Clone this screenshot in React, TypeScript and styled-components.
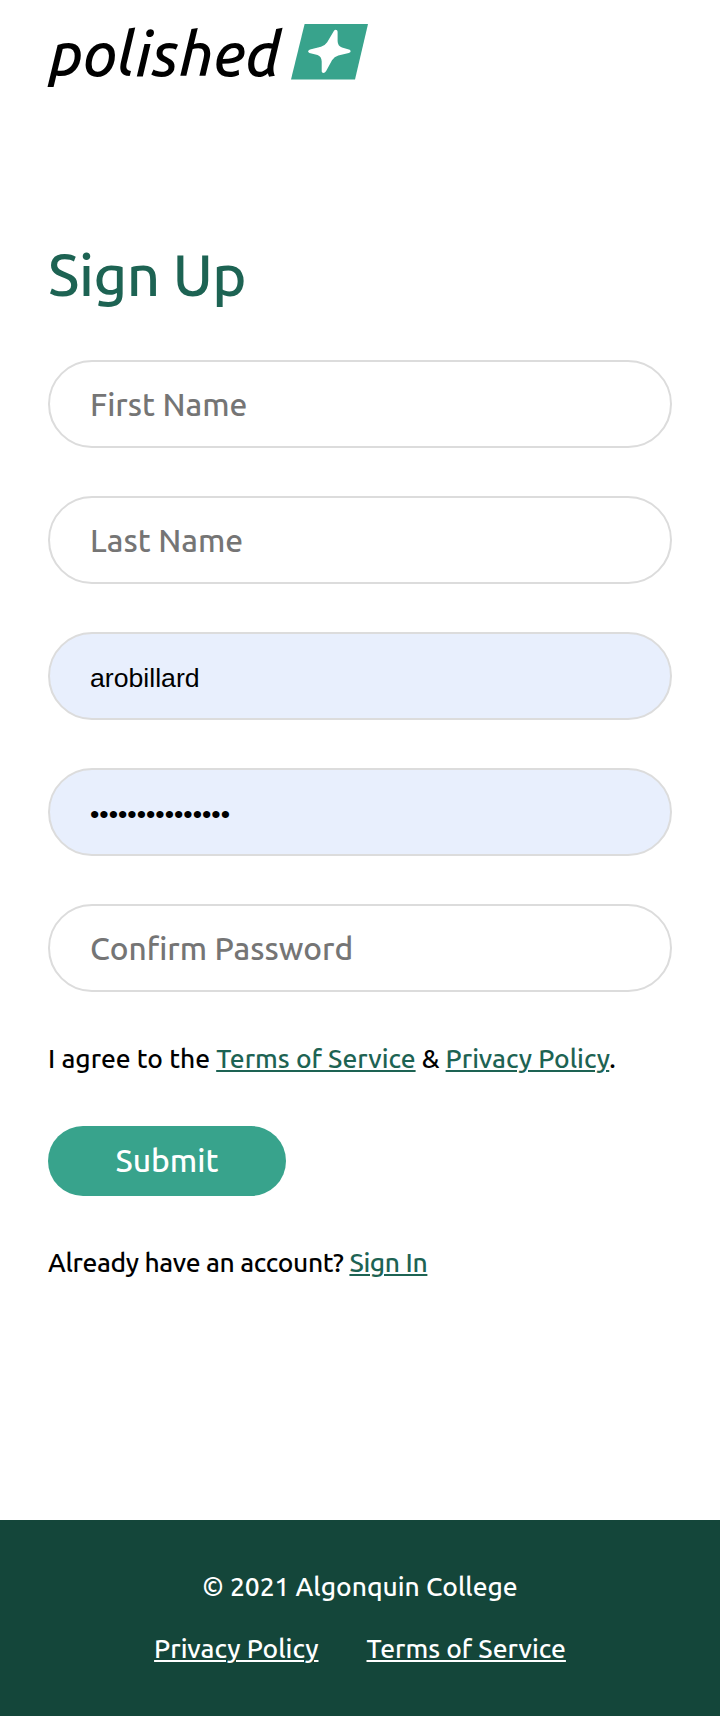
import React from "react";
import styled, { createGlobalStyle } from "styled-components";

const GlobalStyle = createGlobalStyle`
  *, *::before, *::after { box-sizing: border-box; }
  body {
    margin: 0;
    background: #fff;
    color: #000;
    font-family: Ubuntu, "Noto Sans", sans-serif;
    font-size: 26.4px;
    font-weight: 500;
    line-height: 40px;
  }
`;

const Page = styled.div`
  display: flex;
  flex-direction: column;
  min-height: 1716px;
`;

const Header = styled.header`
  display: flex;
  align-items: flex-start;
  padding: 24px 48px 0 49px;
  height: 80px;
`;

const Wordmark = styled.span`
  width: 242px;
  font-size: 61.6px;
  font-style: italic;
  line-height: 60px;
  white-space: nowrap;
`;

const Main = styled.main`
  flex: 1;
  padding: 159px 48px 0;
`;

const Title = styled.h1`
  margin: 0 0 49px;
  color: #1d6353;
  font-size: 58px;
  font-weight: 500;
  line-height: 72px;
  letter-spacing: -0.5px;
`;

const Form = styled.form`
  display: flex;
  flex-direction: column;
  align-items: flex-start;
`;

const Fields = styled.div`
  display: flex;
  flex-direction: column;
  gap: 48px;
  width: 100%;
`;

const Field = styled.input<{ $filled?: boolean }>`
  width: 100%;
  height: 88px;
  margin: 0;
  padding: ${(p) => (p.$filled ? "4px 40px 0" : "0 40px")};
  border: 2px solid #dcdcdc;
  border-radius: 44px;
  outline: none;
  background: ${(p) => (p.$filled ? "#e8effd" : "#fff")};
  color: #000;
  font-family: ${(p) => (p.$filled ? '"Liberation Sans", Arial, sans-serif' : 'Ubuntu, "Noto Sans", sans-serif')};
  font-size: ${(p) => (p.$filled ? "26.67px" : "31.7px")};
  font-weight: ${(p) => (p.$filled ? 400 : 500)};

  &::placeholder {
    color: #757575;
    opacity: 1;
  }
`;

const Note = styled.p<{ $tight?: boolean }>`
  margin: 46px 0 0;
  letter-spacing: ${(p) => (p.$tight ? "-0.34px" : "0")};
`;

const Link = styled.a<{ $light?: boolean }>`
  color: ${(p) => (p.$light ? "#fff" : "#1d6353")};
  text-decoration: underline;
  text-decoration-thickness: 2px;
  text-underline-offset: 2px;
`;

const Submit = styled.button`
  width: 238px;
  height: 70px;
  margin-top: 48px;
  padding: 0 0 2px;
  border: 0;
  border-radius: 35px;
  background: #38a38c;
  color: #fff;
  font-family: inherit;
  font-size: 31.8px;
  font-weight: 500;
`;

const Footer = styled.footer`
  display: flex;
  flex-direction: column;
  align-items: center;
  gap: 22px;
  height: 196px;
  padding-top: 46px;
  background: #14463a;
  color: #fff;
`;

const FooterLinks = styled.nav`
  display: flex;
  gap: 48px;
`;

const LogoMark = () => (
  <svg width="77" height="56" viewBox="0 0 77 56" aria-hidden="true">
    <path d="M13.6 0H77L64 55.5H0Z" fill="#38a38c" />
    <path
      d="M43 6.7Q44.4 5 46 6.2Q46.6 6.8 46.6 8V17Q46.7 22 51 23.6L58.7 25.7Q60.5 26.8 59.2 28.3L57.8 29L47.3 31.5Q43.3 32.6 41 36.2L35 47.3Q33.3 49.7 31.2 48.6Q30.6 48 30.7 46.5V37.5Q30.5 32.3 26.5 31L18.4 29Q16.2 27.6 17.8 26.2L19 25.6L30 22.7Q34 21.6 36.2 18.3Z"
      fill="#fff"
    />
  </svg>
);

export default function App() {
  return (
    <>
      <GlobalStyle />
      <Page>
        <Header>
          <Wordmark>polished</Wordmark>
          <LogoMark />
        </Header>
        <Main>
          <Title>Sign Up</Title>
          <Form>
            <Fields>
              <Field placeholder="First Name" />
              <Field placeholder="Last Name" />
              <Field $filled defaultValue="arobillard" />
              <Field $filled type="password" defaultValue="abcdefghijklmno" />
              <Field type="password" placeholder="Confirm Password" />
            </Fields>
            <Note>
              I agree to the <Link href="#">Terms of Service</Link> &amp;{" "}
              <Link href="#">Privacy Policy</Link>.
            </Note>
            <Submit type="button">Submit</Submit>
          </Form>
          <Note $tight>
            Already have an account? <Link href="#">Sign In</Link>
          </Note>
        </Main>
        <Footer>
          <span>© 2021 Algonquin College</span>
          <FooterLinks>
            <Link $light href="#">Privacy Policy</Link>
            <Link $light href="#">Terms of Service</Link>
          </FooterLinks>
        </Footer>
      </Page>
    </>
  );
}
